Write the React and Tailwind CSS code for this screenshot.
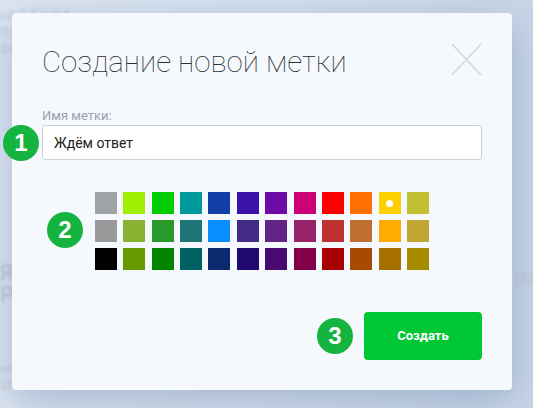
import { useState } from 'react';

const palette = [
  ['#a0a3a6', '#a0ef00', '#00cc00', '#009a9a', '#103fa8', '#3a14a8', '#6e0aa8', '#cc0077', '#ff0000', '#ff7000', '#ffd000', '#c2c032'],
  ['#9a9a9a', '#87b232', '#289a2a', '#1f7575', '#0a8eff', '#412b85', '#612585', '#962368', '#bf3030', '#bf7030', '#ffab00', '#c2a532'],
  ['#000000', '#679a00', '#008400', '#006262', '#0a2a70', '#200a70', '#470a70', '#820048', '#a60000', '#a64b00', '#a67000', '#a68a00'],
];

// numbered hint bubble
const Step = ({ n, className }) => (
  <div className={`absolute w-[36px] h-[36px] rounded-full bg-[#15b440] text-white flex items-center justify-center text-[24px] leading-none font-bold font-['Liberation_Sans',sans-serif] ${className}`}>
    {n}
  </div>
);

const App = () => {
  const [name, setName] = useState('Ждём ответ');
  const [color, setColor] = useState('#ffd000');

  return (
    <div className="relative w-[533px] h-[408px] overflow-hidden bg-linear-to-r from-[#dde6f2] via-[#d6e0ee] to-[#c9d6e8] font-['Roboto',sans-serif]">
      {/* page behind the dialog */}
      <div className="blur-[0.8px] text-[#c4cdd9] text-[13px] leading-[17px] pt-[6px]">
        <p className="-ml-[2px]">ый С Т й К б</p>
        <p>018</p>
        <p>24</p>
        <p className="mt-[206px] text-[22px] leading-[20px] font-bold">Я М</p>
        <p className="text-[22px] leading-[24px] font-bold">Ру</p>
        <p className="mt-[52px]">ым</p>
        <p>20</p>
      </div>
      <p className="absolute left-[514px] top-[264px] blur-[0.8px] text-[#c4cdd9] text-[20px] font-bold">IMG</p>

      {/* dialog */}
      <div className="absolute left-[12px] top-[13px] w-[500px] h-[377px] rounded-[4px] bg-[#f5f8fd] shadow-[0_12px_40px_rgba(70,100,150,0.35)] pt-[27px] px-[30px]">
        <div className="flex justify-between items-start">
          <h1 className="text-[29.5px] leading-[40px] font-thin text-[#2c2f33] pt-[2px]">Создание новой метки</h1>
          <svg width="31" height="33" viewBox="0 0 31 33" className="mt-[3px]">
            <path d="M1 1 L30 32 M30 1 L1 32" stroke="#d4d8de" strokeWidth="1.6" fill="none" />
          </svg>
        </div>

        <label className="block mt-[26px] text-[13px] leading-[16px] text-[#99a2ae]">Имя метки:</label>
        <input
          type="text"
          value={name}
          onChange={(e) => setName(e.target.value)}
          className="mt-[1px] w-full h-[35px] rounded-[3px] border border-[#c9d0da] bg-white px-[11px] text-[14px] text-[#222] outline-none"
        />

        <div className="mt-[32px] flex justify-center">
          <div className="grid grid-cols-12 gap-x-[6.35px] gap-y-[6px]">
            {palette.flat().map((c) => (
              <button
                key={c}
                onClick={() => setColor(c)}
                className="w-[22px] h-[22px] flex items-center justify-center"
                style={{ backgroundColor: c }}
              >
                {color === c && <span className="w-[7px] h-[7px] rounded-full bg-white" />}
              </button>
            ))}
          </div>
        </div>

        <div className="mt-[42px] flex justify-end">
          <button className="w-[118px] h-[48px] rounded-[4px] bg-[#00c834] text-white text-[13px] font-bold">Создать</button>
        </div>

        <Step n="1" className="-left-[9px] top-[112px]" />
        <Step n="2" className="left-[35px] top-[199px]" />
        <Step n="3" className="left-[305px] top-[305px]" />
      </div>
    </div>
  );
};

export default App;
